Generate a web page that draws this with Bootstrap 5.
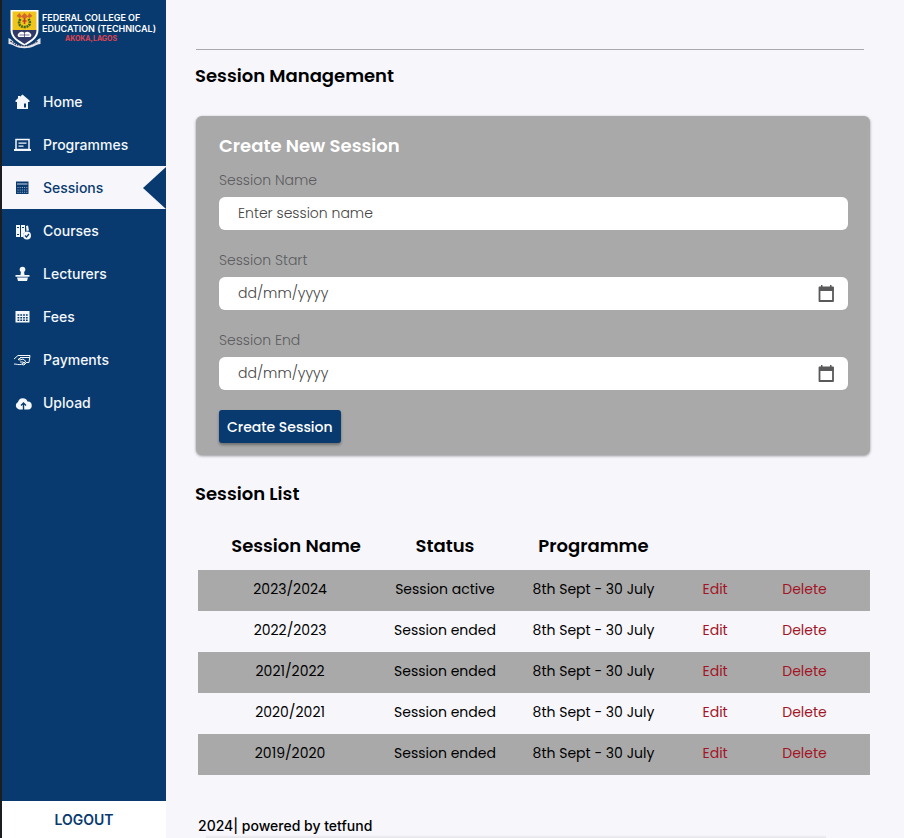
<!DOCTYPE html>
<html lang="en">
<head>
<meta charset="utf-8">
<meta name="viewport" content="width=device-width, initial-scale=1">
<title>Session Management</title>
<link href="https://cdn.jsdelivr.net/npm/bootstrap@5.3.0/dist/css/bootstrap.min.css" rel="stylesheet">
<style>
  :root { --navy: #083a6f; --paper: #f6f6fb; --ash: #a9a9a9; }
  body { font-family: Poppins, Inter, sans-serif; font-size: 14px; line-height: 20px; color: #000; background: var(--paper); }
  h1, h2, h3 { font-size: 18px; line-height: 24px; font-weight: 600; }
  .side { width: 166px; background: var(--navy); border-left: 2px solid #1b1d20; font-family: Inter, sans-serif; }
  .brand { padding: 9px 0 0 5px; height: 80px; color: #fff; font-size: 9px; line-height: 11px; font-weight: 600; }
  .brand:hover { color: #fff; }
  .brand svg { width: 35px; height: 40px; }
  .brand-text { padding-top: 3px; }
  .brand-place { color: #e0434f; font-size: 7px; line-height: 9px; font-weight: 700; padding-right: 16px; }
  .side .nav-link { display: flex; align-items: center; gap: 10px; height: 43px; padding: 0 0 0 10px; color: #f4f7fb; font-weight: 500; }
  .side .nav-link svg { width: 21px; height: 20px; fill: currentColor; }
  .side .nav-link.active { background: var(--paper); color: var(--navy); }
  .pointer { margin-left: auto; border: solid transparent; border-width: 21px 23px 21px 0; border-right-color: var(--navy); }
  .logout { background: #fff; color: var(--navy); font-weight: 600; height: 37px; border: 0; }
  .page { padding: 49px 34px 2px 29px; background: linear-gradient(to top, #e4e4e8, var(--paper)) 40px 100% / 84% 3px no-repeat; }
  .top-rule { margin: 0 6px 14px 1px; border-top: 1px solid #77777c; opacity: .6; }
  .create-box { background: var(--ash); border-radius: 6px; margin: 28px 0 27px 1px; padding: 18px 22px 12px 23px; box-shadow: 0 1px 3px rgba(0,0,0,.4); }
  .create-box h2 { color: #fff; margin-bottom: 12px; }
  .create-box label { color: #5c5c5e; margin-bottom: 7px; display: block; font-weight: 300; }
  .field { margin-bottom: 20px; }
  .field .form-control { height: 33px; border: 0; border-radius: 6px; padding: 0 19px; font-size: 14px; color: #444; font-weight: 300; }
  .field .form-control::placeholder { color: #444; opacity: 1; }
  .field .btn { display: flex; align-items: center; background: #fff; border: 0; border-radius: 6px; padding: 0 13px 0 0; }
  .btn-make { background: var(--navy); color: #fff; font-size: 14px; line-height: 20px; font-weight: 500; height: 33px; padding: 0 8px; border: 0; border-radius: 3px; box-shadow: 0 2px 3px rgba(0,0,0,.35); }
  .btn-make:hover { background: #0b4a8c; color: #fff; }
  .sessions { table-layout: fixed; margin: 15px 0 0 3px; width: calc(100% - 3px); text-align: center; }
  .sessions th { height: 49px; font-size: 18px; font-weight: 600; padding: 0; text-align: center; }
  .sessions th:first-child { padding-left: 12px; }
  .sessions td { height: 41px; padding: 0 0 4px; }
  .sessions tbody tr:nth-child(odd) { background: var(--ash); }
  .sessions td:last-child { padding-right: 12px; }
  .sessions a { color: #a31526; text-decoration: none; }
  .c-name { width: 27.4%; } .c-status { width: 18.7%; } .c-prog { width: 25.5%; } .c-edit { width: 10.7%; }
  footer { padding-left: 3px; font-family: Inter, sans-serif; font-weight: 500; }
</style>
</head>
<body>
<div class="d-flex min-vh-100">
  <aside class="side d-flex flex-column flex-shrink-0">
    <a href="#" class="brand d-flex align-items-start gap-0 text-decoration-none">
      <svg viewBox="0 0 34 40" aria-hidden="true">
        <path d="M3 1h28v20c0 8-7 12-14 16C10 33 3 29 3 21z" fill="#fff"/>
        <path d="M5 2.500h24V21H5z" fill="#f0c51c"/>
        <path d="M5 21h24c0 7-6 10-12 14C11 31 5 28 5 21z" fill="#303a68"/>
        <path d="M9 7l3-3 2 3 3-3 3 3 2-3 3 3-3 2-2-1-3 2-3-2-2 1z" fill="#d3692b"/>
        <path d="M13 10c-3 4-1 8 4 8s7-4 4-8" fill="none" stroke="#40691f" stroke-width="2.600" stroke-dasharray="2 .7"/>
        <path d="M17 9v6M15 12h4" stroke="#c23d25" stroke-width="1.500"/>
        <path d="M10 26c2-4 5-4 7-2 2-2 5-2 7 2l-1 2H11z" fill="#fff"/>
        <path d="M12 26h10M17 24v4" stroke="#303a68" stroke-width=".7"/>
        <path d="M1 29c3 1 4 3 6 5 6 4 14 4 20 0 2-2 3-4 6-5v6c-3 0-4 1-6 2-6 3-14 3-20 0-2-1-3-2-6-2z" fill="#e4e4ec"/>
        <path d="M3 32c3 2 5 4 8 4 5 1 9 1 13-1 3-1 4-2 7-3" fill="none" stroke="#343b5d" stroke-width="1.500" stroke-dasharray="1.500 1"/>
      </svg>
      <span class="brand-text text-nowrap text-center"><span class="d-block text-start">FEDERAL COLLEGE OF<br>EDUCATION (TECHNICAL)</span><span class="brand-place d-block">AKOKA,LAGOS</span></span>
    </a>
    <nav class="nav flex-column flex-nowrap">
      <a class="nav-link" href="#"><svg viewBox="0 0 21 20" aria-hidden="true"><path fill-rule="evenodd" d="M10.500 2.500L17.500 8.500v1.500h-1.500v7H5v-7H3.500V8.500L6 6.300V4h2v.7zM12 11.500v4h2v-4z"/></svg>Home</a>
      <a class="nav-link" href="#"><svg viewBox="0 0 21 20" aria-hidden="true"><path d="M4 4.500h13v10H4z" fill="none" stroke="currentColor" stroke-width="1.500"/><path d="M2 14h17v2H2zM6.500 7.500h8v1.200h-8zM6.500 10.500h5v1.200h-5z"/></svg>Programmes</a>
      <a class="nav-link active" aria-current="page" href="#"><svg viewBox="0 0 21 20" aria-hidden="true"><path d="M4 3.500h12.500v12.500H4z"/><path d="M5 6h10.500" stroke="#c9d4e3"/><path d="M5.500 9.500h10M5.500 12h10M5.500 14.300h10" stroke="#c9d4e3" stroke-width=".8" stroke-dasharray="1 1.200"/></svg>Sessions<span class="pointer"></span></a>
      <a class="nav-link" href="#"><svg viewBox="0 0 21 20" aria-hidden="true"><path d="M4 4h4v12H4zM9 4h4v7l-2 2v3H9zM14 5l2-.5 1 5-2.500.500z"/><path d="M5 6.500h2M10 6.500h2M5 13.500h2" stroke="#083a6f"/><circle cx="15" cy="14.500" r="4"/><path d="M13 14.500l1.500 1.500 2.500-3" fill="none" stroke="#083a6f" stroke-width="1.200"/></svg>Courses</a>
      <a class="nav-link" href="#"><svg viewBox="0 0 21 20" aria-hidden="true"><circle cx="10.500" cy="5.500" r="2.800"/><path d="M9 7h3l.5 4H17.500v1.800h-14V11h5zM5 13.500h11l-1 3.500H6z"/></svg>Lecturers</a>
      <a class="nav-link" href="#"><svg viewBox="0 0 21 20" aria-hidden="true"><path d="M3.500 4h14v11.500h-14z"/><path d="M5.500 8h10.500M5.500 10.700h10.500M5.500 13.300h10.500" stroke="#083a6f" stroke-width="1.400" stroke-dasharray="1.800 1"/></svg>Fees</a>
      <a class="nav-link" href="#"><svg viewBox="0 0 21 20" aria-hidden="true"><g fill="none" stroke="currentColor" stroke-width="1"><path d="M2 9l4-3.500h12l-1 7h-3M8 7.500h9.500M2 14c3 0 4 1 7 .5l5-3-3-2.500-3 1-2-.5 3-2"/><path d="M8 12l3 0 2 1.500M10 14.500l2 .5 2-2"/></g></svg>Payments</a>
      <a class="nav-link" href="#"><svg viewBox="0 0 21 20" aria-hidden="true"><path d="M7 16.500a4 4 0 01-1-7.500 5 5 0 019.500-.5A4 4 0 0116 16.500h-3.500z"/><path d="M11.500 17v-6.500M9 12.500l2.500-2.500 2.500 2.500" fill="none" stroke="#083a6f" stroke-width="1.400"/></svg>Upload</a>
    </nav>
    <button type="button" class="logout mt-auto">LOGOUT</button>
  </aside>

  <main class="page d-flex flex-column flex-grow-1">
    <hr class="top-rule">
    <h1 class="mb-0">Session Management</h1>
    <form class="create-box">
      <h2>Create New Session</h2>
      <div class="field">
        <label for="sname">Session Name</label>
        <input id="sname" class="form-control" type="text" placeholder="Enter session name">
      </div>
      <div class="field">
        <label for="sstart">Session Start</label>
        <div class="input-group">
          <input id="sstart" class="form-control" type="text" placeholder="dd/mm/yyyy">
          <button class="btn" type="button" aria-label="Pick start date"><svg width="17" height="19" viewBox="0 0 17 19" aria-hidden="true"><path d="M1.500 3.500h13.500v13.500h-13.500z" fill="none" stroke="#59595b" stroke-width="1.800" stroke-linejoin="round"/><path d="M1 3h14.500v4H1zM3 1h1.500v3H3zM12 1h1.500v3H12z" fill="#59595b"/></svg></button>
        </div>
      </div>
      <div class="field">
        <label for="send">Session End</label>
        <div class="input-group">
          <input id="send" class="form-control" type="text" placeholder="dd/mm/yyyy">
          <button class="btn" type="button" aria-label="Pick end date"><svg width="17" height="19" viewBox="0 0 17 19" aria-hidden="true"><path d="M1.500 3.500h13.500v13.500h-13.500z" fill="none" stroke="#59595b" stroke-width="1.800" stroke-linejoin="round"/><path d="M1 3h14.500v4H1zM3 1h1.500v3H3zM12 1h1.500v3H12z" fill="#59595b"/></svg></button>
        </div>
      </div>
      <button type="submit" class="btn btn-make">Create Session</button>
    </form>

    <h2 class="mb-0">Session List</h2>
    <table class="sessions">
      <colgroup><col class="c-name"><col class="c-status"><col class="c-prog"><col class="c-edit"><col></colgroup>
      <thead><tr><th scope="col">Session Name</th><th scope="col">Status</th><th scope="col">Programme</th><td></td><td></td></tr></thead>
      <tbody>
        <tr><td>2023/2024</td><td>Session active</td><td>8th Sept - 30 July</td><td><a href="#">Edit</a></td><td><a href="#">Delete</a></td></tr>
        <tr><td>2022/2023</td><td>Session ended</td><td>8th Sept - 30 July</td><td><a href="#">Edit</a></td><td><a href="#">Delete</a></td></tr>
        <tr><td>2021/2022</td><td>Session ended</td><td>8th Sept - 30 July</td><td><a href="#">Edit</a></td><td><a href="#">Delete</a></td></tr>
        <tr><td>2020/2021</td><td>Session ended</td><td>8th Sept - 30 July</td><td><a href="#">Edit</a></td><td><a href="#">Delete</a></td></tr>
        <tr><td>2019/2020</td><td>Session ended</td><td>8th Sept - 30 July</td><td><a href="#">Edit</a></td><td><a href="#">Delete</a></td></tr>
      </tbody>
    </table>
    <footer class="mt-auto">2024| powered by tetfund</footer>
  </main>
</div>
<script src="https://cdn.jsdelivr.net/npm/bootstrap@5.3.0/dist/js/bootstrap.bundle.min.js"></script>
</body>
</html>
